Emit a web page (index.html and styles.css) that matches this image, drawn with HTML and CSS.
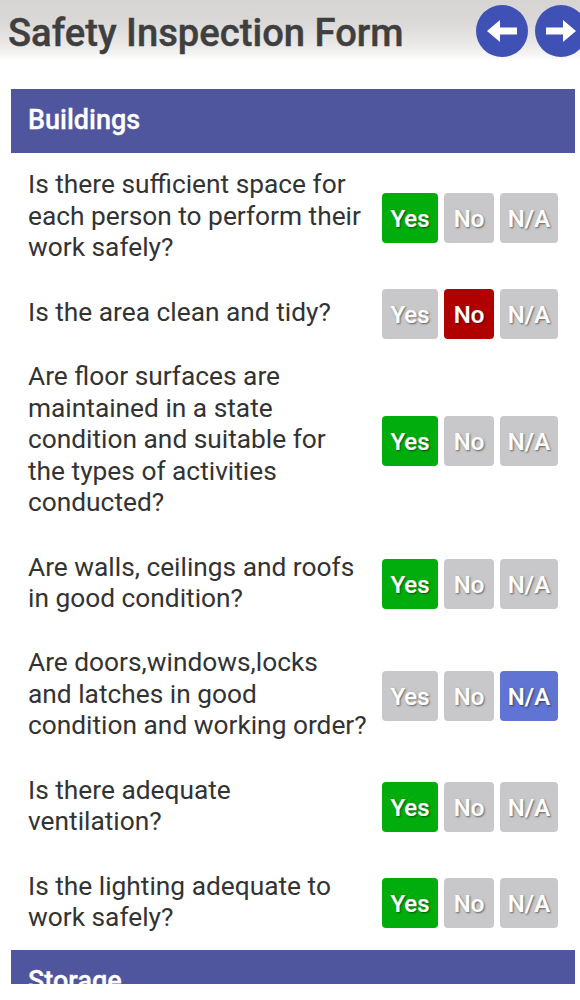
FILE: index.html
```html
<!DOCTYPE html>
<html lang="en">
<head>
<meta charset="utf-8">
<title>Safety Inspection Form</title>
<link rel="stylesheet" href="styles.css">
</head>
<body>
<div class="screen">
  <header class="topbar">
    <h1 class="title">Safety Inspection Form</h1>
    <div class="nav">
      <button class="circle" aria-label="Back"><svg viewBox="0 0 30 22" width="30" height="22"><path d="M0 11 L13 0 V7.5 H30 V14.5 H13 V22 Z" fill="#fff"/></svg></button>
      <button class="circle" aria-label="Next"><svg viewBox="0 0 30 22" width="30" height="22"><path d="M30 11 L17 0 V7.5 H0 V14.5 H17 V22 Z" fill="#fff"/></svg></button>
    </div>
  </header>
  <main class="form">
    <h2 class="section">Buildings</h2>
    <div class="row">
      <p class="q">Is there sufficient space for each person to perform their work safely?</p>
      <div class="opts"><span class="o yes on-yes">Yes</span><span class="o no">No</span><span class="o na">N/A</span></div>
    </div>
    <div class="row">
      <p class="q">Is the area clean and tidy?</p>
      <div class="opts"><span class="o yes">Yes</span><span class="o no on-no">No</span><span class="o na">N/A</span></div>
    </div>
    <div class="row">
      <p class="q">Are floor surfaces are maintained in a state condition and suitable for the types of activities conducted?</p>
      <div class="opts"><span class="o yes on-yes">Yes</span><span class="o no">No</span><span class="o na">N/A</span></div>
    </div>
    <div class="row">
      <p class="q">Are walls, ceilings and roofs in good condition?</p>
      <div class="opts"><span class="o yes on-yes">Yes</span><span class="o no">No</span><span class="o na">N/A</span></div>
    </div>
    <div class="row">
      <p class="q">Are doors,windows,locks<br>and latches in good condition and working order?</p>
      <div class="opts"><span class="o yes">Yes</span><span class="o no">No</span><span class="o na on-na">N/A</span></div>
    </div>
    <div class="row">
      <p class="q">Is there adequate ventilation?</p>
      <div class="opts"><span class="o yes on-yes">Yes</span><span class="o no">No</span><span class="o na">N/A</span></div>
    </div>
    <div class="row">
      <p class="q">Is the lighting adequate to work safely?</p>
      <div class="opts"><span class="o yes on-yes">Yes</span><span class="o no">No</span><span class="o na">N/A</span></div>
    </div>
    <h2 class="section">Storage</h2>
  </main>
</div>
</body>
</html>
```
FILE: styles.css
```css
html, body { margin: 0; background: #fff; }
.screen { width: 580px; height: 984px; overflow: hidden; font-family: Roboto, "Liberation Sans", sans-serif; }
.topbar {
  height: 62px; display: flex; align-items: center; justify-content: space-between;
  padding: 0 0 0 8px; overflow: hidden;
  background: linear-gradient(to bottom, #d6d5d3 0%, #d9d8d6 35%, #ecebea 75%, #fff 100%);
}
.title { margin: 3px 0 0; font-size: 38.2px; font-weight: 500; color: #3f3f3f; white-space: nowrap; -webkit-text-stroke: .4px #3f3f3f; }
.nav { display: flex; gap: 7px; margin-right: -7px; flex: none; }
.circle {
  width: 52px; height: 52px; border: 0; padding: 0; border-radius: 50%; background: #3f51b5;
  display: flex; align-items: center; justify-content: center;
}
.form { padding: 27px 5px 0 11px; }
.section {
  margin: 0; height: 64px; line-height: 62px; padding-left: 17px;
  background: #4f569d; color: #fff; font-size: 27px; font-weight: 500; -webkit-text-stroke: .3px #fff;
}
.row { display: flex; align-items: center; padding: 16.4px 0 16.5px 17px; }
.q { margin: 0 14px 0 0; width: 340px; flex: none; font-size: 26.3px; line-height: 31.5px; color: #333; }
.opts { display: flex; gap: 6px; flex: none; margin: -8.4px 0 -10.6px; }
.o {
  height: 50px; line-height: 52px; text-align: center; border-radius: 4px;
  background: #c8c8ca; color: #fff; font-size: 24px; font-weight: 500;
  text-shadow: 1px 1px 2px rgba(0,0,0,.55); -webkit-text-stroke: .2px #fff;
}
.yes { width: 56px; }
.no { width: 50px; }
.na { width: 58px; }
.on-yes { background: #00ad0c; }
.on-no { background: #b00000; }
.on-na { background: #5f74d3; }
```
